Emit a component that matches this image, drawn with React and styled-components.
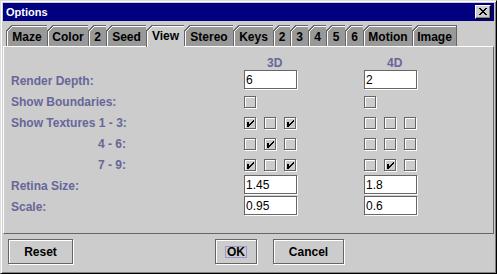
import React from 'react';
import styled, { createGlobalStyle } from 'styled-components';

const Global = createGlobalStyle`
  html, body { margin: 0; padding: 0; background: #cccccc; }
  body { font-family: "Liberation Sans", Arial, sans-serif; }
`;

const Window = styled.div`
  box-sizing: border-box;
  width: 497px;
  height: 274px;
  background: #cccccc;
  border-top: 1px solid #dcdcdc;
  border-left: 1px solid #dcdcdc;
  border-right: 1px solid #000;
  border-bottom: 1px solid #000;
  box-shadow: inset 1px 1px 0 #fff, inset -1px -1px 0 #808080;
  padding: 2px;
  display: flex;
  flex-direction: column;
`;

const TitleBar = styled.div`
  height: 18px;
  background: #000080;
  display: flex;
  align-items: center;
  justify-content: space-between;
  padding: 0 3px;
`;

const Title = styled.span`
  color: #fff;
  font: bold 11px "Liberation Sans", Arial, sans-serif;
`;

const CloseButton = styled.div`
  box-sizing: border-box;
  width: 16px;
  height: 14px;
  background: #cccccc;
  border-top: 1px solid #fff;
  border-left: 1px solid #fff;
  border-right: 1px solid #000;
  border-bottom: 1px solid #000;
  box-shadow: inset -1px -1px 0 #808080;
  display: flex;
  align-items: center;
  justify-content: center;
  padding: 0 1px 1px 0;
`;

const Body = styled.div`
  display: flex;
  flex-direction: column;
  padding-top: 4px;
  flex: 1;
`;

const TabStrip = styled.div`
  display: flex;
  align-items: flex-end;
  padding-left: 3px;
  height: 21px;
`;

const Tab = styled.div`
  position: relative;
  box-sizing: border-box;
  width: ${p => p.$w}px;
  height: ${p => (p.$selected ? 22 : 21)}px;
  margin-bottom: ${p => (p.$selected ? -1 : 0)}px;
  z-index: ${p => (p.$selected ? 1 : 0)};
  border-top: 1px solid #666;
  border-left: 1px solid #666;
  border-right: ${p => (p.$last ? '1px solid #666' : 'none')};
  background: ${p => (p.$selected ? '#cccccc' : '#999999')};
  box-shadow: inset 1px 1px 0 #fff;
  font: bold 12px "Liberation Sans", Arial, sans-serif;
  color: #000;
  display: flex;
  align-items: center;
  justify-content: center;
  padding: ${p => (p.$selected ? '0 0 1px' : '1px 0 0')};
  &::before {
    content: '';
    position: absolute;
    top: -1px;
    left: -1px;
    width: 7px;
    height: 7px;
    background: linear-gradient(
      135deg,
      #cccccc 0,
      #cccccc calc(50% - 0.8px),
      #666 calc(50% - 0.8px),
      #666 calc(50% + 0.4px),
      #fff calc(50% + 0.4px),
      #fff calc(50% + 1.2px),
      transparent calc(50% + 1.2px)
    );
  }
`;

const Panel = styled.div`
  box-sizing: border-box;
  height: 188px;
  border-top: 1px solid #fff;
  border-left: 1px solid #fff;
  border-right: 1px solid #666;
  border-bottom: 1px solid #666;
  padding: 9px 0 0 7px;
`;

const Form = styled.div`
  display: grid;
  grid-template-columns: 233px 120px 1fr;
  grid-template-rows: 14px repeat(7, 21px);
`;

const Header = styled.div`
  font: bold 12px/14px "Liberation Sans", Arial, sans-serif;
  color: #666699;
  padding-left: 23px;
`;

const Label = styled.div`
  font: bold 12px "Liberation Sans", Arial, sans-serif;
  color: #666699;
  display: flex;
  align-items: center;
  white-space: nowrap;
`;

const RangeLabel = styled(Label)`
  justify-content: flex-end;
  width: 115px;
`;

const Cell = styled.div`
  display: flex;
  align-items: ${p => (p.$top ? 'flex-start' : 'center')};
  gap: 8px;
`;

const Field = styled.div`
  box-sizing: border-box;
  width: 53px;
  height: 19px;
  background: #fff;
  border: 1px solid #666;
  box-shadow: 1px 1px 0 #fff;
  font: 12px "Liberation Sans", Arial, sans-serif;
  color: #000;
  display: flex;
  align-items: center;
  padding-left: 1px;
`;

const Box = styled.span`
  position: relative;
  box-sizing: border-box;
  width: 12px;
  height: 12px;
  border: 1px solid #666;
  box-shadow: 1px 1px 0 #fff, inset 1px 1px 0 #fff;
  & > svg {
    position: absolute;
    left: -1px;
    top: -1px;
  }
`;

const ButtonBar = styled.div`
  display: flex;
  align-items: flex-start;
  padding: 5px 0 0 5px;
`;

const Button = styled.div`
  box-sizing: border-box;
  width: ${p => p.$w}px;
  height: 25px;
  margin-left: ${p => p.$ml || 0}px;
  border: 1px solid #666;
  box-shadow: 1px 1px 0 #fff, inset 1px 1px 0 #fff;
  font: bold 12px "Liberation Sans", Arial, sans-serif;
  color: #000;
  display: flex;
  align-items: center;
  justify-content: center;
`;

const Focus = styled.span`
  outline: 1px solid #9999cc;
  padding: 0 1px;
  line-height: 10px;
`;

function Check({ on }) {
  return (
    <Box>
      {on && (
        <svg width="13" height="13" viewBox="0 0 13 13" shapeRendering="crispEdges">
          <rect x="3" y="5" width="2" height="5" fill="#000" />
          <path
            d="M9 3h1v2h-1zM8 4h1v2h-1zM7 5h1v2h-1zM6 6h1v2h-1zM5 7h1v2h-1z"
            fill="#000"
          />
        </svg>
      )}
    </Box>
  );
}

function Checks({ values }) {
  return (
    <Cell>
      {values.map((v, i) => (
        <Check key={i} on={v} />
      ))}
    </Cell>
  );
}

const tabs = [
  ['Maze', 41], ['Color', 41], ['2', 18], ['Seed', 40], ['View', 38],
  ['Stereo', 49], ['Keys', 40], ['2', 17], ['3', 18], ['4', 18], ['5', 19],
  ['6', 18], ['Motion', 49], ['Image', 45],
];

export default function App() {
  return (
    <>
      <Global />
      <Window>
        <TitleBar>
          <Title>Options</Title>
          <CloseButton>
            <svg width="8" height="7" viewBox="0 0 8 7" shapeRendering="crispEdges">
              <path
                d="M0 0h2v1h-2zM6 0h2v1h-2zM1 1h2v1h-2zM5 1h2v1h-2zM2 2h4v1h-4zM3 3h2v1h-2zM2 4h4v1h-4zM1 5h2v1h-2zM5 5h2v1h-2zM0 6h2v1h-2zM6 6h2v1h-2z"
                fill="#000"
              />
            </svg>
          </CloseButton>
        </TitleBar>
        <Body>
          <TabStrip>
            {tabs.map(([t, w], i) => (
              <Tab key={i} $w={w} $selected={t === 'View'} $last={i === tabs.length - 1}>
                {t}
              </Tab>
            ))}
          </TabStrip>
          <Panel>
            <Form>
              <div />
              <Header>3D</Header>
              <Header>4D</Header>

              <Label>Render Depth:</Label>
              <Cell $top><Field>6</Field></Cell>
              <Cell $top><Field>2</Field></Cell>

              <Label>Show Boundaries:</Label>
              <Checks values={[false]} />
              <Checks values={[false]} />

              <Label>Show Textures 1 - 3:</Label>
              <Checks values={[true, false, true]} />
              <Checks values={[false, false, false]} />

              <RangeLabel>4 - 6:</RangeLabel>
              <Checks values={[false, true, false]} />
              <Checks values={[false, false, false]} />

              <RangeLabel>7 - 9:</RangeLabel>
              <Checks values={[true, false, true]} />
              <Checks values={[false, true, false]} />

              <Label>Retina Size:</Label>
              <Cell $top><Field>1.45</Field></Cell>
              <Cell $top><Field>1.8</Field></Cell>

              <Label>Scale:</Label>
              <Cell $top><Field>0.95</Field></Cell>
              <Cell $top><Field>0.6</Field></Cell>
            </Form>
          </Panel>
          <ButtonBar>
            <Button $w={65}>Reset</Button>
            <Button $w={42} $ml={142}><Focus>OK</Focus></Button>
            <Button $w={71} $ml={16}>Cancel</Button>
          </ButtonBar>
        </Body>
      </Window>
    </>
  );
}
